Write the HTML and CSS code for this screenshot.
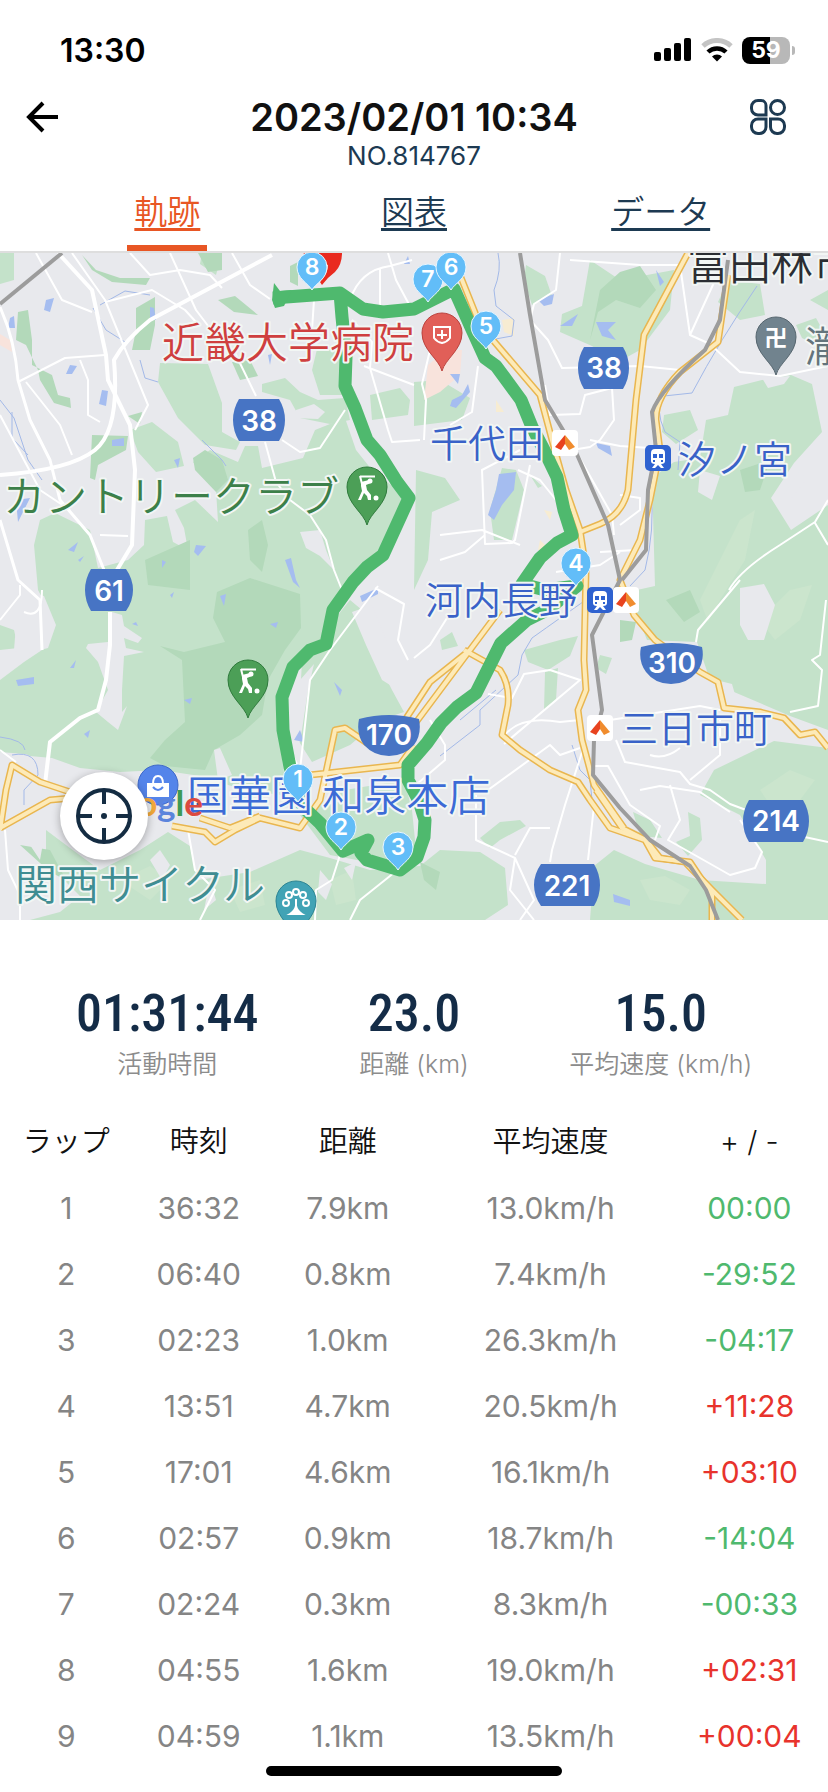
FILE: index.html
```
<!DOCTYPE html>
<html lang="ja">
<head>
    <meta charset="UTF-8">
    <meta name="viewport" content="width=device-width, initial-scale=1.0">
    <title>2023/02/01 10:34</title>
    <link rel="stylesheet" href="styles.css">
</head>
<body>
    <div class="status-bar">
        <span class="clock">13:30</span>
        <div class="status-icons">
            <svg width="38" height="24" viewBox="0 0 38 24">
                <rect x="0" y="14" width="7" height="9" rx="2"/>
                <rect x="10" y="10" width="7" height="13" rx="2"/>
                <rect x="20" y="5" width="7" height="18" rx="2"/>
                <rect x="30" y="0" width="7" height="23" rx="2"/>
            </svg>
            <svg width="32" height="24" viewBox="0 0 32 24" fill="none">
                <path d="M2 8a20.500 20.500 0 0 1 28 0" stroke="#c4c4c4" stroke-width="5"/>
                <path d="M7 14a13 13 0 0 1 18 0" stroke="#000" stroke-width="4.500"/>
                <path d="M11 18.500a7 7 0 0 1 10 0L16 23.500z" fill="#000"/>
            </svg>
            <div class="battery">59</div>
        </div>
    </div>

    <header class="header">
        <button class="icon-button" aria-label="戻る">
            <svg width="34" height="34" viewBox="0 0 34 34" fill="none" stroke="#000" stroke-width="4">
                <path d="M33 17H5M18 3L4 17l14 14"/>
            </svg>
        </button>
        <div class="heading">
            <h1>2023/02/01 10:34</h1>
            <p>NO.814767</p>
        </div>
        <button class="icon-button menu-button" aria-label="メニュー">
            <svg width="38" height="38" viewBox="0 0 38 38" fill="none" stroke="#1d3a52" stroke-width="3">
                <path d="M9 2.500h3a5 5 0 0 1 5 5V17H9a6.500 6.500 0 0 1-6.500-6.500V9A6.500 6.500 0 0 1 9 2.500z"/>
                <circle cx="28.500" cy="9.500" r="7"/>
                <path d="M9 21h8v8a6.500 6.500 0 0 1-6.500 6.500H9A6.500 6.500 0 0 1 2.500 29v-1.500A6.500 6.500 0 0 1 9 21z"/>
                <path d="M21.500 21H29a6.500 6.500 0 0 1 6.500 6.500V29a6.500 6.500 0 0 1-6.500 6.500h-1a6.500 6.500 0 0 1-6.500-6.500z"/>
            </svg>
        </button>
    </header>

    <nav class="tabs">
        <a class="tab active" href="#track">軌跡</a>
        <a class="tab" href="#chart">図表</a>
        <a class="tab" href="#data">データ</a>
    </nav>

    <div class="map" id="track">
        <svg class="map-canvas" viewBox="0 253 828 667" preserveAspectRatio="xMidYMid slice">
            <defs>
                <path id="pin" d="M0 38C-3 26-20 17-20 0a20 20 0 0 1 40 0C20 17 3 26 0 38z"/>
                <path id="lap" d="M0 23C-4 16-15 12-15 0a15 15 0 0 1 30 0C15 12 4 16 0 23z"/>
                <g id="golfer">
                    <path d="M-7-10.500H8M-7-11L-5-3" fill="none" stroke="#fff" stroke-width="2"/>
                    <path d="M-6-5L2-7 4-4-1-2 0 3 4 8 4 13H1L0 9-3 6-6 13H-9L-5 4-6-1z" fill="#fff"/>
                    <circle cx="3" cy="-6" r="2.500" fill="#fff"/>
                    <circle cx="9" cy="11" r="2.500" fill="#fff"/>
                </g>
                <g id="tent">
                    <rect x="-13" y="-13" width="26" height="26" rx="4" fill="#fff"/>
                    <path d="M0-8L-10 4l6 3 4-6z" fill="#e8431f"/>
                    <path d="M0-8L10 4 4 7 0 1z" fill="#f08c2e"/>
                </g>
                <g id="train">
                    <rect x="-13" y="-13" width="26" height="26" rx="5" fill="#2f62d0"/>
                    <path d="M-3-9h6q4 0 4 4v8q0 3-4 3l3 4h-3l-3-3-3 3h-3l3-4q-4 0-4-3v-8q0-4 4-4z" fill="#fff"/>
                    <path d="M-5-4h4v4h-4zM1-4h4v4h-4zM-5 2h2v2h-2zM3 2h2v2h-2z" fill="#2f62d0"/>
                </g>
            </defs>

            <rect x="0" y="253" width="828" height="667" fill="#e8e9ed"/>

            <!-- woods -->
            <g fill="#c4e2ca">
                <path d="M160 363L208 364 222 403 222 432 240 442 236 450 205 445 178 418 158 382z"/>
                <path d="M262 384L285 378 300 392 318 400 345 398 350 420 330 424 300 418 290 400 262 392z"/>
                <path d="M318 345L344 347 342 395 320 395 312 370z"/>
                <path d="M193 462L210 450 238 462 245 446 258 446 262 468 303 458 315 430 345 418 356 450 372 470 400 492 406 510 385 545 340 600 318 645 290 670 280 710 282 760 288 796 244 790 200 776 160 770 120 772 80 768 52 758 30 756 0 738 0 680 24 662 42 650 52 628 46 605 38 590 34 545 40 520 55 513 90 530 98 568 128 560 144 545 145 520 167 516 173 542 188 550 184 528 175 510 195 500 218 522 216 490z"/>
                <path d="M0 625L14 630 18 648 0 650zM0 720L20 730 40 745 60 757 0 752z"/>
                <path d="M130 430L152 422 178 442 184 466 156 472 138 452z"/>
                <path d="M302 660L350 600 362 610 372 650 392 690 404 712 380 720 350 745 312 762 298 740z"/>
                <path d="M0 253L14 253 14 280 0 284zM202 253L222 253 216 275 200 264z"/>
                <path d="M46 830L70 848 100 870 140 850 168 832 190 846 198 880 250 872 300 850 330 858 370 870 420 866 440 850 480 852 505 868 508 905 485 920 30 920 60 912 80 896 46 862z"/>
                <path d="M300 815L345 790 404 780 412 810 416 850 400 868 330 855z"/>
                <path d="M594 866L614 850 645 864 700 880 766 884 766 860 740 815 700 795 714 770 774 741 828 748 828 920 590 920z"/>
                <path d="M734 387L762 380 791 375 812 384 822 432 794 463 771 498 791 530 828 505 828 730 790 716 734 692 708 674 697 642 647 640 628 592 655 586 652 478 674 462 700 458 706 420 728 415z"/>
                <path d="M590 260L620 280 674 270 670 310 640 350 618 362 592 346 560 332 562 314 582 306z"/>
                <path d="M526 265L545 276 552 296 532 305 524 280z"/>
                <path d="M414 382L440 380 470 398 462 420 414 426zM416 470L445 478 460 500 432 512 428 560 414 590z"/>
                <path d="M502 468L516 470 524 490 512 540 494 540 490 510z"/>
                <path d="M524 650L560 640 578 636 570 656 548 670 528 662zM545 672L558 668 556 700 544 710z"/>
                <path d="M728 280L760 284 765 315 740 320 718 302zM664 415L690 410 698 430 676 444 662 432z"/>
                <path d="M370 395L400 388 410 400 408 415 372 420z"/>
                <path d="M688 812L700 818 702 840 688 856 676 842 690 836zM633 812L650 820 662 838 640 836zM600 655L612 658 606 674 596 668z"/>
                <path d="M480 838L500 822 520 820 526 826 500 840 490 848zM530 475L542 486 538 488zM440 640L452 632 458 646 442 650z"/>
                <path d="M796 325L816 318 828 340 810 342 802 338zM810 300L828 290 828 310z"/>
            </g>
            <g fill="#b3d9ba">
                <path d="M160 646L184 652 225 642 213 618 217 592 250 578 300 594 301 628 285 650 268 680 262 715 240 735 214 750 205 770 165 766 150 758 165 740 185 722 182 660z"/>
                <path d="M145 560L190 540 190 590 148 585zM193 458L205 450 222 460 228 480 216 492 195 470z"/>
                <path d="M18 312L28 310 32 340 32 365 52 375 58 395 70 398 71 408 54 403 40 380 38 370 26 345 16 340z"/>
                <path d="M92 435L128 436 126 450 98 465 95 480 90 478z"/>
                <path d="M82 255L96 270 120 278 150 278 146 285 112 282 92 270z"/>
                <path d="M136 308L155 297 155 325 150 350 132 350 136 330zM218 300L235 296 258 315 234 312z"/>
                <path d="M198 253L222 253 222 270 208 272zM128 416L142 412 140 424zM290 266L298 262 298 286 290 282z"/>
                <path d="M250 360L258 376 240 380 232 362z"/>
                <path d="M248 530L262 520 268 545 262 572 250 560zM620 272L640 266 656 290 640 308 616 300 598 312 590 340 600 290z"/>
                <path d="M620 620L636 622 632 640 620 642zM666 600L690 590 700 612 684 622zM740 470L770 460 760 490 745 492z"/>
                <path d="M20 845L50 850 66 880 50 872zM420 862L440 872 436 890 424 880z"/>
            </g>
            <!-- lighter slopes -->
            <g fill="#cbe5cd">
                <path d="M700 600L720 560 740 520 755 510 745 560 720 600 708 622zM760 620L790 590 812 585 800 620 775 640z"/>
                <path d="M640 880L665 876 690 890 680 905 650 900zM760 790L790 770 815 780 800 800 775 812z"/>
                <path d="M120 880L150 866 170 880 150 900zM230 890L260 880 265 905 240 912zM330 880L352 870 356 900 336 905z"/>
            </g>
            <!-- clearings -->
            <g fill="#e8e9ed">
                <path d="M112 612L122 615 124 626 142 638 138 643 124 638 126 648 144 652 124 656 122 690 122 712 127 706 118 730 108 722 96 712 108 690 98 662 86 648 88 644 108 642z"/>
                <path d="M18 590L44 596 56 625 48 648 22 655 14 650 16 625 2 618z"/>
                <path d="M296 410L314 404 325 412 318 419 294 418zM300 532L320 530 326 550 334 570 320 556 306 548z"/>
                <path d="M300 680L314 664 308 690 302 730 296 760 288 720 292 690z"/>
                <path d="M214 750L220 748 232 775 218 780zM352 612L372 605 386 640 400 660 398 690 382 680 366 645z"/>
                <path d="M740 588L764 584 775 605 764 640 748 640 740 625zM700 470L720 476 712 500 698 492z"/>
                <path d="M762 378L790 376 784 384 768 388zM716 680L732 684 736 698 720 690zM800 470L806 480 790 500 784 494z"/>
                <path d="M150 860L160 850 170 865 162 880zM210 880L216 900 204 910zM344 868L356 862 352 880zM30 808L46 826 40 860 20 830z"/>
                <path d="M320 870L332 884 326 900 318 892z"/>
            </g>
            <path d="M0 334L10 340 12 352 0 345zM428 365L446 350 462 350 460 375 440 392 424 400z" fill="#f8e3dc"/>
            <path d="M502 320L514 318 514 336 504 332zM544 510L552 512 550 520zM496 400L504 412 496 412zM540 540L548 548 538 550z" fill="#f7ecd2"/>

            <!-- water -->
            <g fill="#a5bdf0">
                <path d="M46 300L54 298 50 312 44 310zM150 307L154 308 156 320 150 320zM70 365L77 366 72 374 66 374zM102 390L108 391 106 406 99 404z"/>
                <path d="M112 440L124 438 124 446 112 446zM285 560L291 558 296 580 300 588 293 582zM196 545L206 546 198 556 194 552zM16 500L30 498 18 522z"/>
                <path d="M499 474L516 472 514 490 502 505 494 520 488 515 496 490zM450 374L460 374 458 384zM452 400L462 395 468 384 470 392 456 408 450 406z"/>
                <path d="M560 326L578 314 572 326zM596 322L616 322 608 330 616 340 602 336zM656 270L664 282 660 286zM596 443L610 446 612 456 598 448z"/>
                <path d="M360 596L378 588 378 594 362 602zM613 894L630 900 630 906 614 902zM16 680L34 677 34 684 18 686zM334 682L342 690 340 696z"/>
                <path d="M170 595L174 592 172 598zM220 596L226 594 224 606zM270 624L278 622 276 628zM184 700L192 698 190 704zM76 660L70 668 74 668z"/>
                <path d="M68 550L78 542 74 552zM78 560L84 556 80 562zM162 560L166 562 162 568zM174 460L180 458 178 468zM268 355L272 354 270 365zM538 300L554 294 552 304 544 306z"/>
                <path d="M294 740L300 730 304 742zM10 318L14 316 15 328 8 328zM404 264L408 256 410 264zM84 734L90 730 88 738zM132 624L136 622 138 626z"/>
            </g>
            <g class="stream">
                <path d="M757 286Q720 340 692 393L664 396Q654 408 665 432L680 442 678 470M651 490Q655 530 645 570L630 586"/>
                <path d="M93 308L106 330 125 342M100 305L125 291 150 295M140 360L145 378 158 382M498 253Q502 270 494 290L496 306 514 320 512 336 490 340"/>
                <path d="M0 400L14 418 28 460 42 480M12 412L12 438 28 455M202 440L222 460 226 466"/>
                <path d="M600 590Q560 618 532 638L522 655 518 675 480 710 480 725 440 756M572 745L580 770 590 780 592 800M496 690L460 720"/>
                <path d="M0 737Q24 740 25 750M12 755Q38 750 38 775L24 790 24 805"/>
            </g>

            <!-- small roads -->
            <g class="road">
                <path d="M58 253L92 290 106 355 108 380 130 425 135 470 132 545 114 575M110 612L110 645 106 680 98 710 80 718 50 742 45 784" stroke-width="4"/>
                <path d="M0 475Q70 470 95 450T114 360Q125 340 150 320L272 255" stroke-width="4"/>
                <path d="M0 307Q15 340 18 380L30 420 50 460 60 500 90 535 104 570M0 520L18 580 40 600 42 650" stroke-width="3"/>
                <path d="M72 253L105 300 148 405 135 430M36 253L62 300 92 312M18 382L65 358 105 355M80 360L88 380 88 415 100 422M26 382L60 425 72 455M0 415L40 490 70 510M100 535L128 536"/>
                <path d="M130 253L150 275 180 270 210 275 222 288M170 253L196 310 215 335 236 355 256 396M232 253L250 285 270 299M105 302L152 290 185 310 196 322M314 300L312 330"/>
                <path d="M265 442L276 482 290 500 310 515 326 540 334 570 342 590M282 440L300 452 320 448 345 410M352 320L372 342 370 368 388 430 392 442 420 440M364 366L414 385"/>
                <path d="M350 300Q360 270 390 266L412 260M388 253L396 280 412 310M380 268L380 310M560 253L556 290 534 304 530 320 548 340 562 368 640 366 680 370"/>
                <path d="M430 350L422 384 426 400 424 440M478 366L472 412 450 425M570 260L640 265 680 265 690 335 710 344 740 372 780 376 828 366M722 265L690 335M545 385L550 415 580 414 585 395 612 388 614 420 600 440 590 447 572 450M590 440L620 446 650 448"/>
                <path d="M556 416L612 515 614 535M518 470L540 480 556 500M530 465L515 540 512 543 485 544 482 470 520 450M440 535L482 530 520 545M440 560L465 552 485 535M620 495L640 498 640 510 620 525M600 552L636 550M556 572L600 565 620 552"/>
                <path d="M729 590Q740 570 780 545L815 522 828 500M740 580L698 630 696 642M815 523L828 545M826 600L820 655 812 660 822 670 818 706 790 712"/>
                <path d="M378 586L330 650 310 680 300 770M294 660L285 700 290 750 300 770M375 588L404 604 398 640 408 660M414 658L430 645 447 618M430 720L445 745 445 760 410 790"/>
                <path d="M504 744L580 680 550 670 524 674 512 698 488 694M504 736Q520 715 560 722L580 720M488 790L550 745 560 755 580 748M584 746L565 805 552 850 550 862M594 806L588 860M476 795L476 840 515 858 534 900 520 920M515 858L510 890 534 920M550 828L530 828 515 855M610 720L700 706 720 710"/>
                <path d="M616 740L625 762 680 772 690 784 710 790 730 804 746 810M590 766L608 766 630 805 660 826 655 840M640 790L660 786 700 792 730 812M670 785L680 820 668 840 700 858 730 875 755 868 762 852 740 820M720 720L720 755 690 780M650 755Q665 760 680 748"/>
                <path d="M0 750L16 762M188 830L195 870 215 890 200 920M340 855L332 880 316 890 315 920M395 872L360 900 350 920M5 830L8 870 20 895 20 920M0 620L20 595 20 585M24 612Q42 620 42 590M828 842L800 836"/>
            </g>

            <!-- highways -->
            <g class="highway-edge">
                <path id="hw1" d="M460 275L480 325 540 395 552 440 566 490 580 530 586 570 584 660 586 690 578 710 582 740 594 785 624 828"/>
                <path id="hw2" d="M688 253L644 335 636 400 628 490Q622 515 600 524L580 532"/>
                <path id="hw3" d="M728 275L718 342 680 372Q655 398 656 420L660 450 650 500 640 540 620 580 634 615 655 640 700 672 718 682 724 708 760 712 784 718 800 735 815 732 828 748"/>
                <path id="hw4" d="M414 725L470 650 500 610M405 720L430 682 470 650M464 650L500 670Q510 685 508 705L502 735 520 750 550 770 578 782 590 800 610 828 645 840 655 858 690 862 712 895 712 920"/>
                <path id="hw5" d="M596 790L622 828 646 840 660 858 685 862 712 890 742 920M0 828L50 800 72 798M0 830L6 790 12 765 40 782 70 792M172 826L205 832 215 842 235 830 260 818 300 828 320 800 335 730 345 728 370 745M200 818L230 828 260 816M310 775L400 765 414 745"/>
            </g>
            <g class="highway">
                <use href="#hw1"/><use href="#hw2"/><use href="#hw3"/><use href="#hw4"/><use href="#hw5"/>
            </g>

            <!-- railways -->
            <g class="rail">
                <path d="M0 304L62 253"/>
                <path d="M520 253L530 315 545 400 575 450 608 525 620 580 592 635 602 710 594 740 593 775 620 808 650 840 690 866 706 890 718 920"/>
                <path d="M728 260L720 320 705 350Q660 390 652 412L656 450 648 490 646 550 622 580"/>
            </g>

            <path class="route" d="M273 298L313 295 340 293 363 309 383 312 414 309 454 289 470 325 485 358 496 366 521 400 532 427 544 450 557 477 564 510 572 535 557 543 540 558 522 584 545 590 577 586 547 610 527 620 501 643 484 677 476 693 457 707 441 723 427 743 408 765 408 780 419 801 425 820 424 837 417 857 400 870 367 860 361 853 368 840 343 851 320 823 303 807 290 767 283 730 282 697 293 667 310 650 326 644 333 610 353 582 367 567 383 555 409 498 397 482 380 455 367 440 355 408 345 386 346 357 342 317 340 293"/>
            <path d="M274 283L280 291 292 290 284 306 275 308 272 300z" fill="#4fb96e"/>

            <!-- road numbers -->
            <g class="shield">
                <path d="M239 399h40q6 10 6 21t-6 21h-40q-6-10-6-21t6-21zM91 569h35q7 10 7 21t-7 21h-35q-6-10-6-21t6-21zM584 347h39q6 10 6 21t-6 21h-39q-6-10-6-21t6-21z"/>
                <path d="M541 864h53q6 10 6 21t-6 21h-53q-7-10-7-21t7-21zM749 800h54q6 10 6 21t-6 21h-54q-6-10-6-21t6-21z"/>
                <path d="M641 647q31-8 61 0q3 14-5 25-10 12-26 12t-25-12q-8-11-5-25zM359 719q30-8 60 0q3 15-5 26-10 11-25 11t-25-11q-8-11-5-26z"/>
            </g>
            <g class="shield-text">
                <text x="259" y="431">38</text>
                <text x="109" y="601">61</text>
                <text x="604" y="378">38</text>
                <text x="567" y="896">221</text>
                <text x="776" y="831">214</text>
                <text x="672" y="673">310</text>
                <text x="389" y="745">170</text>
            </g>

            <!-- place names -->
            <g class="place">
                <text x="162" y="358" fill="#cf3f3f">近畿大学病院</text>
                <text x="3" y="512" fill="#3c8049">カントリークラブ</text>
                <text x="687" y="280" fill="#2b2e33">富田林市</text>
                <text x="805" y="362" fill="#63747c">瀧</text>
                <text x="187" y="811" fill="#3c6bd6">国華園 和泉本店</text>
                <text x="15" y="900" fill="#3f8d92">関西サイクル</text>
                <g fill="#3962c8" class="station">
                    <text x="430" y="457">千代田</text>
                    <text x="678" y="473">汐ノ宮</text>
                    <text x="425" y="614">河内長野</text>
                    <text x="620" y="742">三日市町</text>
                </g>
            </g>

            <use href="#tent" x="565" y="443"/>
            <use href="#tent" x="626" y="600"/>
            <use href="#tent" x="600" y="728"/>
            <use href="#train" x="658" y="458"/>
            <use href="#train" x="600" y="600"/>

            <!-- place markers -->
            <g stroke-width="1">
                <use href="#pin" x="442" y="333" fill="#e15f58" stroke="#bb423d"/>
                <use href="#pin" x="776" y="337" fill="#71838e" stroke="#56666f"/>
                <use href="#pin" x="367" y="487" fill="#4c9f57" stroke="#2f7a3c"/>
                <use href="#pin" x="248" y="680" fill="#4c9f57" stroke="#2f7a3c"/>
                <circle cx="158" cy="785" r="20" fill="#5484ea" stroke="#3d68c8"/>
                <use href="#pin" x="296" y="901" fill="#41a3b5" stroke="#2c8493"/>
            </g>
            <path d="M434 327h16v11q-3 4-8 5-5-1-8-5zM442 330v9M437 335h10" fill="none" stroke="#fff" stroke-width="2"/>
            <text x="776" y="346" class="temple">卍</text>
            <use href="#golfer" x="367" y="487"/>
            <use href="#golfer" x="248" y="680"/>
            <path d="M147 783h22v14h-22z" fill="#fff"/>
            <path d="M153 784q0-8 5-8t5 8" fill="none" stroke="#fff" stroke-width="2"/>
            <path d="M153 787q5 6 10 0" fill="none" stroke="#5484ea" stroke-width="2"/>
            <path d="M296 899v12M290 914q5-3 6-8 1 5 6 8z" fill="#fff" stroke="#fff" stroke-width="2"/>
            <g fill="none" stroke="#fff" stroke-width="2">
                <circle cx="286" cy="903" r="3"/><circle cx="289" cy="895" r="3"/><circle cx="296" cy="892" r="3"/><circle cx="303" cy="895" r="3"/><circle cx="306" cy="903" r="3"/>
            </g>
            <text x="203" y="816" class="google"><tspan fill="#4285f4">G</tspan><tspan fill="#ea4335">o</tspan><tspan fill="#f2a93b">o</tspan><tspan fill="#5b84dc">g</tspan><tspan fill="#3d9a56">l</tspan><tspan fill="#dc4a40">e</tspan></text>

            <!-- lap markers -->
            <path d="M303 253h39q0 12-7 19-7 5-13 13l-2-3q8-9 8-17z" fill="#e92a1f"/>
            <g class="lap">
                <use href="#lap" x="428" y="279"/>
                <use href="#lap" x="451" y="267"/>
                <use href="#lap" x="312" y="267"/>
                <use href="#lap" x="486" y="326"/>
                <use href="#lap" x="576" y="563"/>
                <use href="#lap" x="298" y="779"/>
                <use href="#lap" x="341" y="827"/>
                <use href="#lap" x="398" y="847"/>
            </g>
            <g class="lap-text">
                <text x="428" y="287">7</text>
                <text x="451" y="275">6</text>
                <text x="312" y="275">8</text>
                <text x="486" y="334">5</text>
                <text x="576" y="571">4</text>
                <text x="298" y="787">1</text>
                <text x="341" y="835">2</text>
                <text x="398" y="855">3</text>
            </g>
        </svg>
        <button class="locate" aria-label="現在地">
            <svg width="58" height="58" viewBox="0 0 58 58" fill="none" stroke="#142c42" stroke-width="4">
                <circle cx="29" cy="29" r="26"/>
                <path d="M29 3v14M29 41v14M3 29h14M41 29h14"/>
                <circle cx="29" cy="29" r="3" fill="#142c42" stroke="none"/>
            </svg>
        </button>
    </div>

    <section class="stats">
        <div class="stat">
            <strong>01:31:44</strong>
            <span>活動時間</span>
        </div>
        <div class="stat">
            <strong>23.0</strong>
            <span>距離 (km)</span>
        </div>
        <div class="stat">
            <strong>15.0</strong>
            <span>平均速度 (km/h)</span>
        </div>
    </section>

    <table class="laps">
        <thead>
            <tr><th class="col-lap">ラップ</th><th class="col-time">時刻</th><th class="col-dist">距離</th><th class="col-speed">平均速度</th><th class="col-diff">+ / -</th></tr>
        </thead>
        <tbody>
            <tr><td>1</td><td>36:32</td><td>7.9km</td><td>13.0km/h</td><td class="faster">00:00</td></tr>
            <tr><td>2</td><td>06:40</td><td>0.8km</td><td>7.4km/h</td><td class="faster">-29:52</td></tr>
            <tr><td>3</td><td>02:23</td><td>1.0km</td><td>26.3km/h</td><td class="faster">-04:17</td></tr>
            <tr><td>4</td><td>13:51</td><td>4.7km</td><td>20.5km/h</td><td class="slower">+11:28</td></tr>
            <tr><td>5</td><td>17:01</td><td>4.6km</td><td>16.1km/h</td><td class="slower">+03:10</td></tr>
            <tr><td>6</td><td>02:57</td><td>0.9km</td><td>18.7km/h</td><td class="faster">-14:04</td></tr>
            <tr><td>7</td><td>02:24</td><td>0.3km</td><td>8.3km/h</td><td class="faster">-00:33</td></tr>
            <tr><td>8</td><td>04:55</td><td>1.6km</td><td>19.0km/h</td><td class="slower">+02:31</td></tr>
            <tr><td>9</td><td>04:59</td><td>1.1km</td><td>13.5km/h</td><td class="slower">+00:04</td></tr>
        </tbody>
    </table>

    <div class="home-indicator"></div>
</body>
</html>
```
FILE: styles.css
```
* {
    box-sizing: border-box;
}

body {
    margin: 0;
    background-color: #fff;
    color: #111;
    font-family: Inter, "Noto Sans CJK JP", sans-serif;
}

button {
    border: none;
    padding: 0;
    background: none;
    cursor: pointer;
}

svg {
    display: block;
}

/* Status bar */
.status-bar {
    display: flex;
    justify-content: space-between;
    align-items: center;
    height: 92px;
    padding: 8px 38px 0 60px;
}

.clock {
    font-size: 32px;
    font-weight: 600;
    color: #000;
}

.status-icons {
    display: flex;
    align-items: center;
    gap: 9px;
}

.battery {
    position: relative;
    width: 48px;
    height: 27px;
    border-radius: 8px;
    background: linear-gradient(to right, #000 58%, #b8b8b8 58%);
    color: #fff;
    font-size: 23px;
    font-weight: 700;
    line-height: 27px;
    text-align: center;
}

.battery::after {
    content: "";
    position: absolute;
    left: 50px;
    top: 9px;
    width: 3px;
    height: 9px;
    border-radius: 0 3px 3px 0;
    background-color: #b8b8b8;
}

/* Header */
.header {
    display: flex;
    justify-content: space-between;
    align-items: flex-start;
    height: 88px;
    padding: 0 41px 0 25px;
}

.icon-button {
    width: 38px;
    padding-top: 8px;
}

.menu-button {
    padding-top: 6px;
}

.heading {
    flex: 1;
    text-align: center;
    padding-left: 16px;
}

.heading h1 {
    margin: 0;
    font-size: 38px;
    font-weight: 600;
    line-height: 50px;
}

.heading p {
    margin: 0;
    font-size: 26px;
    line-height: 28px;
    color: #1d3a52;
}

/* Tabs */
.tabs {
    display: grid;
    grid-template-columns: repeat(3, 1fr);
    height: 73px;
    padding: 0 44px;
    border-bottom: 2px solid #dedede;
}

.tab {
    position: relative;
    color: #1d3a52;
    font-family: "Noto Sans CJK JP", sans-serif;
    font-size: 33px;
    font-weight: 350;
    line-height: 60px;
    text-align: center;
    text-underline-offset: 4px;
}

.tab.active {
    color: #e85624;
}

.tab.active::after {
    content: "";
    position: absolute;
    left: 50%;
    bottom: 0;
    width: 80px;
    height: 6px;
    margin-left: -40px;
    background-color: #e85624;
}

/* Map */
.map {
    position: relative;
}

.map-canvas {
    width: 100%;
    aspect-ratio: 828 / 667;
}

.road {
    fill: none;
    stroke: #fff;
    stroke-width: 2;
    stroke-linejoin: round;
}

.stream {
    fill: none;
    stroke: #a3b9e8;
    stroke-width: 1;
}

.highway-edge {
    fill: none;
    stroke: #e9b64f;
    stroke-width: 7;
    stroke-linejoin: round;
}

.highway {
    fill: none;
    stroke: #fdeab8;
    stroke-width: 4;
    stroke-linejoin: round;
}

.rail {
    fill: none;
    stroke: #9c9c9c;
    stroke-width: 4;
    stroke-linejoin: round;
}

.route {
    fill: none;
    stroke: #4fb96e;
    stroke-width: 13;
    stroke-linejoin: round;
}

.shield {
    fill: #4774c4;
}

.shield-text {
    fill: #fff;
    font-size: 28px;
    font-weight: 600;
    text-anchor: middle;
}

.place {
    font-family: "Noto Sans CJK JP", sans-serif;
    font-size: 42px;
    font-weight: 350;
    stroke: #f2f6f4;
    stroke-width: 4px;
    paint-order: stroke;
    stroke-linejoin: round;
}

.place .station {
    font-size: 38px;
}

.temple {
    fill: #fff;
    font-family: "Noto Sans CJK JP", sans-serif;
    font-size: 23px;
    font-weight: 700;
    text-anchor: middle;
}

.google {
    font-family: Lato, sans-serif;
    font-size: 35px;
    font-weight: 700;
    text-anchor: end;
}

.lap {
    fill: #62bdf8;
    stroke: #eaf7ff;
    stroke-width: 1;
}

.lap-text {
    fill: #fff;
    font-size: 23px;
    font-weight: 600;
    text-anchor: middle;
}

.locate {
    position: absolute;
    left: 60px;
    bottom: 60px;
    display: flex;
    justify-content: center;
    align-items: center;
    width: 88px;
    height: 88px;
    border-radius: 50%;
    background-color: #fff;
    box-shadow: 0 2px 8px rgba(0, 0, 0, 0.3);
}

/* Totals */
.stats {
    display: grid;
    grid-template-columns: repeat(3, 1fr);
    height: 189px;
    padding: 62px 44px 0;
    text-align: center;
}

.stat strong {
    display: block;
    color: #142c47;
    font-family: "Roboto Condensed", "Liberation Sans Narrow", "Liberation Sans", sans-serif;
    font-size: 52px;
    font-weight: 500;
    line-height: 64px;
}

.stat span {
    display: block;
    color: #8c8c8c;
    font-size: 25px;
    font-weight: 350;
    line-height: 36px;
    white-space: nowrap;
}

/* Lap table */
.laps {
    width: 100%;
    border-collapse: collapse;
    table-layout: fixed;
    font-size: 30px;
    text-align: center;
}

.laps th,
.laps td {
    height: 66px;
    padding: 0;
    line-height: 40px;
}

.laps th {
    font-size: 29px;
    font-weight: 350;
}

.laps td {
    color: #858585;
}

.col-lap,
.col-time {
    width: 16%;
}

.col-dist {
    width: 20%;
}

.col-speed {
    width: 29%;
}

.col-diff {
    width: 19%;
}

.laps .faster {
    color: #4fb96e;
}

.laps .slower {
    color: #e8332c;
}

.home-indicator {
    position: fixed;
    left: 50%;
    bottom: 16px;
    width: 296px;
    height: 10px;
    margin-left: -148px;
    border-radius: 5px;
    background-color: #000;
}
```
